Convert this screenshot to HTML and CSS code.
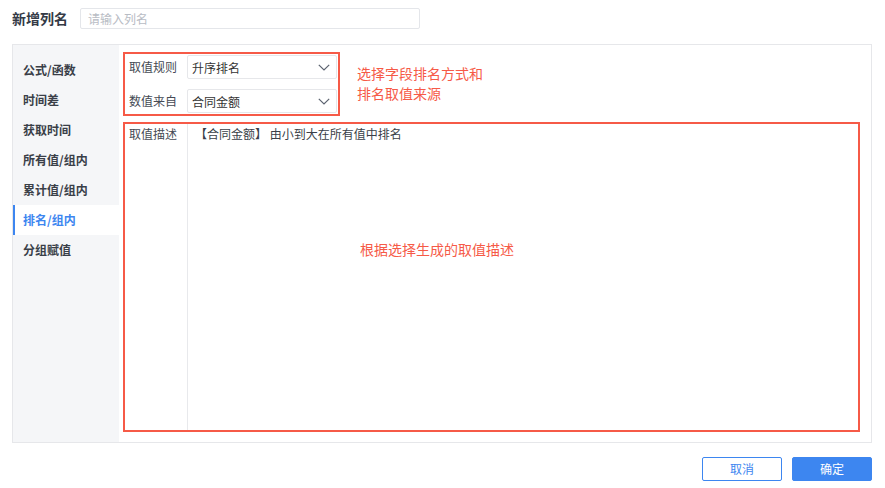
FILE: index.html
```html
<!DOCTYPE html>
<html lang="zh">
<head>
<meta charset="utf-8">
<link rel="stylesheet" href="styles.css">
</head>
<body>
<div class="header">
  <div class="title">新增列名</div>
  <div class="name-input">请输入列名</div>
</div>
<div class="panel">
  <div class="sidebar">
    <div class="nav-item">公式/函数</div>
    <div class="nav-item">时间差</div>
    <div class="nav-item">获取时间</div>
    <div class="nav-item">所有值/组内</div>
    <div class="nav-item">累计值/组内</div>
    <div class="nav-item active">排名/组内</div>
    <div class="nav-item">分组赋值</div>
  </div>
  <div class="content">
    <div class="top-row">
      <div class="group1">
        <div class="form-row">
          <div class="label">取值规则</div>
          <div class="select"><span>升序排名</span><svg class="chev" width="12" height="7" viewBox="0 0 12 7"><path d="M0.8 0.8L6 6L11.2 0.8" fill="none" stroke="#5c6370" stroke-width="1.2"/></svg></div>
        </div>
        <div class="form-row">
          <div class="label">数值来自</div>
          <div class="select"><span>合同金额</span><svg class="chev" width="12" height="7" viewBox="0 0 12 7"><path d="M0.8 0.8L6 6L11.2 0.8" fill="none" stroke="#5c6370" stroke-width="1.2"/></svg></div>
        </div>
      </div>
      <div class="note note1">选择字段排名方式和<br>排名取值来源</div>
    </div>
    <div class="group2">
      <div class="label desc-label">取值描述</div>
      <div class="desc">【合同金额】 由小到大在所有值中排名</div>
      <div class="note note2">根据选择生成的取值描述</div>
    </div>
  </div>
</div>
<div class="footer">
  <div class="btn btn-cancel">取消</div>
  <div class="btn btn-ok">确定</div>
</div>
</body>
</html>
```
FILE: styles.css
```css
* { box-sizing: border-box; }
body {
  margin: 0;
  background: #fff;
  font-family: "Noto Sans CJK SC", "Noto Sans", sans-serif;
  color: #333;
  width: 885px;
  height: 488px;
  overflow: hidden;
}
.header {
  display: flex;
  align-items: center;
  padding: 8px 0 0 12px;
  height: 29px;
}
.title {
  font-size: 14px;
  font-weight: 700;
  color: #343a46;
  line-height: 21px;
}
.name-input {
  margin-left: 12px;
  width: 340px;
  height: 21px;
  border: 1px solid #e4e6ea;
  border-radius: 2px;
  font-size: 12px;
  line-height: 19px;
  color: #b8bcc4;
  padding-left: 7px;
}
.panel {
  margin: 15px 13px 0 12px;
  height: 399px;
  border: 1px solid #e6e7ea;
  display: flex;
}
.sidebar {
  width: 106px;
  background: #f5f6f8;
  padding-top: 10px;
}
.nav-item {
  height: 30px;
  line-height: 30px;
  padding-left: 10px;
  font-size: 12px;
  font-weight: 600;
  color: #3a3f48;
}
.nav-item.active {
  background: #fff;
  color: #3d86f0;
  border-left: 2px solid #3d86f0;
  padding-left: 8px;
}
.content {
  flex: 1;
  background: #fff;
  padding: 7px 0 0 4px;
}
.top-row {
  display: flex;
  align-items: flex-start;
}
.group1 {
  width: 217px;
  height: 64px;
  border: 2px solid #f65a47;
  padding: 1px 1px 1px 4px;
  display: flex;
  flex-direction: column;
  gap: 10px;
}
.form-row {
  display: flex;
  align-items: center;
  height: 24px;
}
.label {
  width: 58px;
  font-size: 12px;
  color: #454a54;
  line-height: 18px;
}
.select {
  width: 150px;
  height: 24px;
  border: 1px solid #e6e7ea;
  border-radius: 2px;
  display: flex;
  align-items: center;
  justify-content: space-between;
  padding: 0 6px 0 4px;
  font-size: 12px;
  color: #333;
}
.chev { display: block; }
.note {
  color: #f65a47;
  font-size: 14px;
  line-height: 20px;
}
.note1 {
  margin-left: 17px;
  margin-top: 11px;
}
.group2 {
  position: relative;
  margin-top: 6px;
  width: 737px;
  height: 310px;
  border: 2px solid #f65a47;
  display: flex;
}
.desc-label {
  width: 62px;
  padding-left: 4px;
  padding-top: 1px;
}
.desc {
  flex: 1;
  border-left: 1px solid #e8e9ec;
  font-size: 12px;
  line-height: 18px;
  padding: 1px 0 0 7px;
  color: #3a3f48;
}
.note2 {
  position: absolute;
  left: 235px;
  top: 115px;
}
.footer {
  display: flex;
  justify-content: flex-end;
  gap: 10px;
  padding-right: 13px;
  margin-top: 14px;
}
.btn {
  width: 80px;
  height: 24px;
  border-radius: 2px;
  font-size: 12px;
  line-height: 22px;
  text-align: center;
}
.btn-cancel {
  border: 1px solid #3d86f0;
  color: #3d86f0;
  background: #fff;
}
.btn-ok {
  border: 1px solid #3d86f0;
  background: #3d86f0;
  color: #fff;
}
```
